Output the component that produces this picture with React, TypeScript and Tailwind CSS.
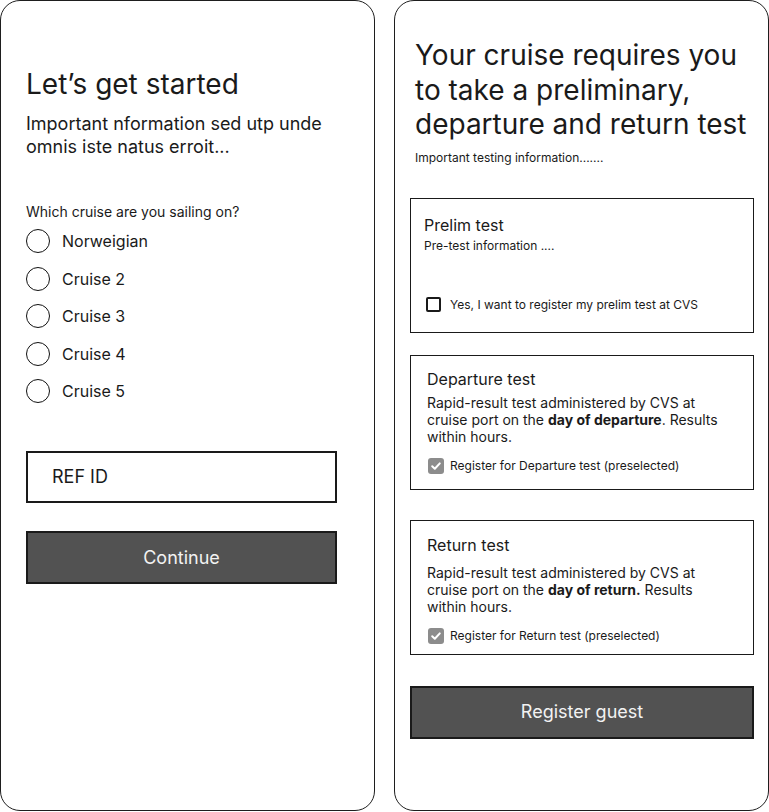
import React from "react";

const cruises = ["Norweigian", "Cruise 2", "Cruise 3", "Cruise 4", "Cruise 5"];

function Radio({ label }: { label: string }) {
    return (
        <label className="flex h-6 items-center gap-3">
            <span className="h-6 w-6 shrink-0 rounded-full border-[1.5px] border-[#111]" />
            <span className="text-base leading-5">{label}</span>
        </label>
    );
}

function CheckedBox() {
    return (
        <span className="flex h-4 w-4 shrink-0 items-center justify-center rounded-[3px] bg-[#8c8c8c]">
            <svg width="12" height="12" viewBox="0 0 12 12" fill="none">
                <path d="M2.2 6.3 4.8 8.8 9.8 3.4" stroke="#fff" strokeWidth="2" strokeLinecap="round" strokeLinejoin="round" />
            </svg>
        </span>
    );
}

function TestCard({
    title,
    highlight,
    after,
    check,
    extra,
}: {
    title: string;
    highlight: string;
    after: string;
    check: string;
    extra?: boolean;
}) {
    return (
        <div className={"flex h-[135px] flex-col border border-[#1a1a1a] pl-4 " + (extra ? "pt-[14px]" : "pt-[13px]")}>
            <h3 className="text-base leading-5">{title}</h3>
            <p className={"w-[300px] text-sm leading-[17px] " + (extra ? "mt-[9px]" : "mt-[5px]")}>
                Rapid-result test administered by CVS at cruise port on the{" "}
                <span className="font-bold">{highlight}</span>
                {after}
            </p>
            <div className="mt-[13px] flex items-center gap-[6px] pl-px">
                <CheckedBox />
                <span className="text-xs leading-[15px]">{check}</span>
            </div>
        </div>
    );
}

export default function App() {
    return (
        <div className="flex w-[769px] gap-[19px] bg-white font-[Inter,sans-serif] text-[#1a1a1a]">
            {/* Step 1 */}
            <div className="flex h-[811px] w-[375px] shrink-0 flex-col rounded-[20px] border border-[#1e1e1e] pl-[25px] pt-[66px]">
                <h1 className="text-[28px] leading-[34px]">Let’s get started</h1>
                <p className="mt-[11px] w-[310px] text-lg leading-[23px]">
                    Important nformation sed utp unde omnis iste natus erroit...
                </p>
                <p className="mt-[45px] text-sm leading-[17px]">Which cruise are you sailing on?</p>
                <div className="mt-[9px] flex flex-col gap-[13.5px]">
                    {cruises.map((c) => (
                        <Radio key={c} label={c} />
                    ))}
                </div>
                <div className="mt-[48px] flex h-[52px] w-[311px] items-center border-2 border-[#1a1a1a] pl-6 text-lg">
                    REF ID
                </div>
                <button className="mt-[28px] flex h-[53px] w-[311px] items-center justify-center border-2 border-[#1a1a1a] bg-[#525252] text-lg text-[#f2f2f2]">
                    Continue
                </button>
            </div>

            {/* Step 2 */}
            <div className="flex h-[811px] w-[375px] shrink-0 flex-col rounded-[20px] border border-[#1e1e1e] pl-[15px] pr-[14px] pt-[37px]">
                <h1 className="pl-[5px] text-[28px] leading-[34.5px]">
                    Your cruise requires you to take a preliminary, departure and return test
                </h1>
                <p className="mt-[8px] pl-[5px] text-xs leading-[15px]">Important testing information.......</p>

                <div className="mt-[33px] flex h-[135px] flex-col border border-[#1a1a1a] pl-[13px] pt-4">
                    <h3 className="text-base leading-5">Prelim test</h3>
                    <p className="mt-[3px] text-xs leading-[15px]">Pre-test information ....</p>
                    <div className="mt-[44px] flex items-center gap-[9px] pl-[2px]">
                        <span className="h-[15px] w-[15px] shrink-0 rounded-[2px] border-2 border-[#1a1a1a]" />
                        <span className="text-xs leading-[15px]">Yes, I want to register my prelim test at CVS</span>
                    </div>
                </div>

                <div className="mt-[22px]">
                    <TestCard
                        title="Departure test"
                        highlight="day of departure"
                        after=". Results within hours."
                        check="Register for Departure test (preselected)"
                    />
                </div>
                <div className="mt-[30px]">
                    <TestCard
                        title="Return test"
                        highlight="day of return."
                        after=" Results within hours."
                        check="Register for Return test (preselected)"
                        extra
                    />
                </div>

                <button className="mt-[31px] flex h-[53px] w-full items-center justify-center border-2 border-[#1a1a1a] bg-[#525252] text-lg text-[#f2f2f2]">
                    Register guest
                </button>
            </div>
        </div>
    );
}
